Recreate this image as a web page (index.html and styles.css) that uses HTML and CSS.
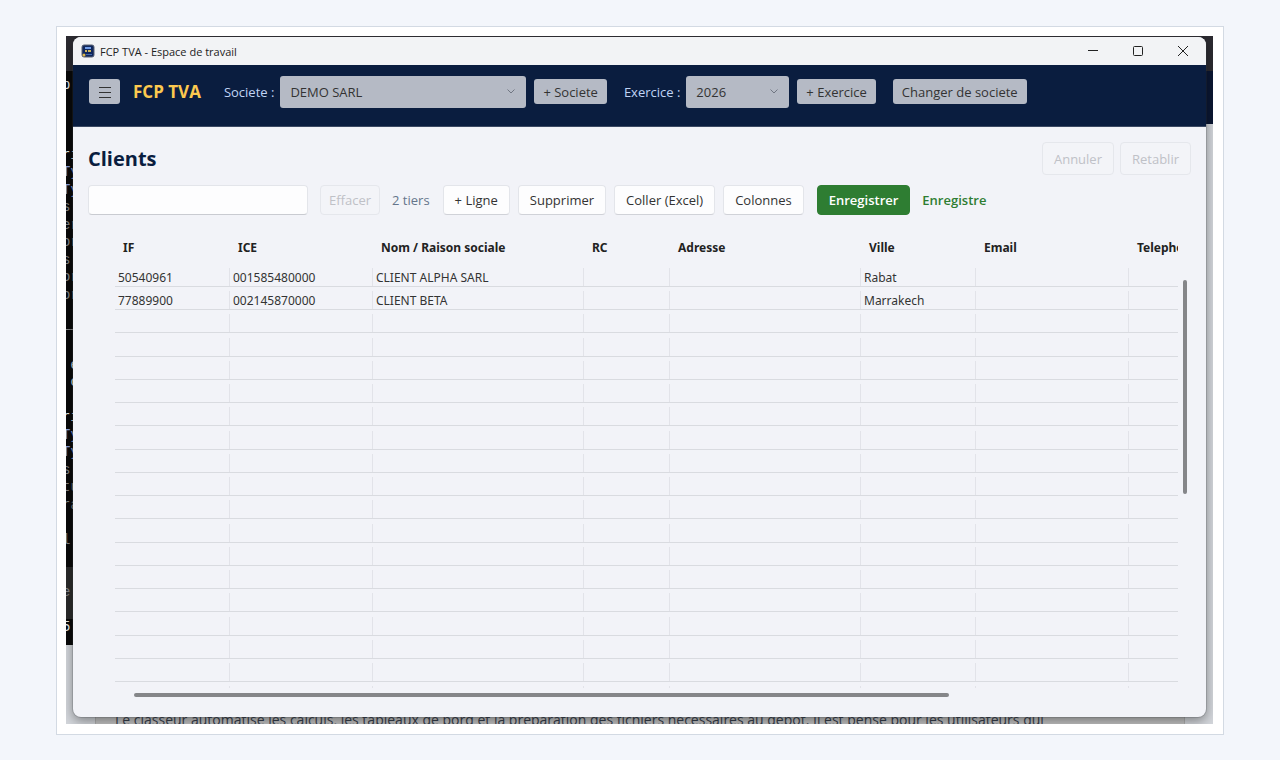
FILE: index.html
```
<!DOCTYPE html>
<html lang="fr">
<head>
  <meta charset="UTF-8">
  <title>FCP TVA - Espace de travail</title>
  <link rel="stylesheet" href="styles.css">
</head>
<body>
  <div class="frame">
    <div class="desktop">
      <div class="back-title"></div>
      <div class="back-band"></div>
      <div class="terminal" aria-hidden="true">
        <span class="bright">p</span>
        <span></span>
        <span></span>
        <span></span>
        <span class="bright">ri</span>
        <span class="blue">Ty</span>
        <span class="blue">Ty</span>
        <span>s</span>
        <span>er</span>
        <span>or</span>
        <span>s</span>
        <span>or</span>
        <span>or</span>
        <span></span>
        <span>──</span>
        <span></span>
        <span class="bright">&nbsp;e</span>
        <span class="bright">&nbsp;c</span>
        <span></span>
        <span class="bright">ri</span>
        <span class="blue">Ty</span>
        <span class="blue">Ty</span>
        <span>s</span>
        <span>tu</span>
        <span>ra</span>
        <span></span>
        <span>l</span>
        <span></span>
        <span class="prompt"></span>
        <span class="prompt">e</span>
        <span class="prompt"></span>
        <span class="bright">5</span>
      </div>
      <p class="doc">Le classeur automatise les calculs, les tableaux de bord et la préparation des fichiers nécessaires au dépôt. Il est pensé pour les utilisateurs qui</p>

      <div class="window">
        <div class="titlebar">
          <svg class="app-icon" viewBox="0 0 14 14">
            <rect x="1" y="1" width="12" height="12" rx="2" fill="#10275c" stroke="#5a6274"/>
            <path d="M4 4h6" stroke="#6f9be8" stroke-width="2"/>
            <path d="M4 7h2M7 7h3" stroke="#cdb45e" stroke-width="2"/>
            <path d="M5 10.500h6" stroke="#4468ab"/>
            <circle cx="3" cy="11" r="1.500" fill="#e0b84a"/>
          </svg>
          <span class="title">FCP TVA - Espace de travail</span>
          <div class="win-buttons">
            <button aria-label="Minimiser"><svg viewBox="0 0 12 12"><path d="M1 5.500h10"/></svg></button>
            <button aria-label="Agrandir"><svg viewBox="0 0 12 12"><rect x="1.500" y="1.500" width="9" height="9" rx="1"/></svg></button>
            <button aria-label="Fermer"><svg viewBox="0 0 12 12"><path d="M1 1l10 10M11 1l-10 10"/></svg></button>
          </div>
        </div>

        <header class="topbar">
          <button class="menu" aria-label="Menu"><svg viewBox="0 0 12 12"><path d="M0 1.500h12M0 6.500h12M0 11.500h12"/></svg></button>
          <strong class="brand">FCP TVA</strong>
          <label for="societe">Societe :</label>
          <select id="societe" class="societe"><option>DEMO SARL</option></select>
          <button>+ Societe</button>
          <label for="exercice" class="exercice-label">Exercice :</label>
          <select id="exercice" class="exercice"><option>2026</option></select>
          <button>+ Exercice</button>
          <button class="change">Changer de societe</button>
        </header>

        <main>
          <div class="heading">
            <h1>Clients</h1>
            <button disabled>Annuler</button>
            <button disabled>Retablir</button>
          </div>

          <div class="toolbar">
            <input type="text" id="recherche" aria-label="Rechercher">
            <button class="clear" disabled>Effacer</button>
            <span class="count">2 tiers</span>
            <button>+ Ligne</button>
            <button>Supprimer</button>
            <button>Coller (Excel)</button>
            <button>Colonnes</button>
            <button class="save">Enregistrer</button>
            <span class="saved">Enregistre</span>
          </div>

          <div class="sheet">
            <div class="table-clip">
              <table>
                <colgroup>
                  <col class="c-if"><col class="c-ice"><col class="c-nom"><col class="c-rc"><col class="c-adresse"><col class="c-ville"><col class="c-email"><col class="c-tel">
                </colgroup>
                <thead>
                  <tr><th>IF</th><th>ICE</th><th>Nom / Raison sociale</th><th>RC</th><th>Adresse</th><th>Ville</th><th>Email</th><th>Telephone</th></tr>
                </thead>
                <tbody>
                  <tr><td>50540961</td><td>001585480000</td><td>CLIENT ALPHA SARL</td><td></td><td></td><td>Rabat</td><td></td><td></td></tr>
                  <tr><td>77889900</td><td>002145870000</td><td>CLIENT BETA</td><td></td><td></td><td>Marrakech</td><td></td><td></td></tr>
                  <tr><td></td><td></td><td></td><td></td><td></td><td></td><td></td><td></td></tr>
                  <tr><td></td><td></td><td></td><td></td><td></td><td></td><td></td><td></td></tr>
                  <tr><td></td><td></td><td></td><td></td><td></td><td></td><td></td><td></td></tr>
                  <tr><td></td><td></td><td></td><td></td><td></td><td></td><td></td><td></td></tr>
                  <tr><td></td><td></td><td></td><td></td><td></td><td></td><td></td><td></td></tr>
                  <tr><td></td><td></td><td></td><td></td><td></td><td></td><td></td><td></td></tr>
                  <tr><td></td><td></td><td></td><td></td><td></td><td></td><td></td><td></td></tr>
                  <tr><td></td><td></td><td></td><td></td><td></td><td></td><td></td><td></td></tr>
                  <tr><td></td><td></td><td></td><td></td><td></td><td></td><td></td><td></td></tr>
                  <tr><td></td><td></td><td></td><td></td><td></td><td></td><td></td><td></td></tr>
                  <tr><td></td><td></td><td></td><td></td><td></td><td></td><td></td><td></td></tr>
                  <tr><td></td><td></td><td></td><td></td><td></td><td></td><td></td><td></td></tr>
                  <tr><td></td><td></td><td></td><td></td><td></td><td></td><td></td><td></td></tr>
                  <tr><td></td><td></td><td></td><td></td><td></td><td></td><td></td><td></td></tr>
                  <tr><td></td><td></td><td></td><td></td><td></td><td></td><td></td><td></td></tr>
                  <tr><td></td><td></td><td></td><td></td><td></td><td></td><td></td><td></td></tr>
                  <tr><td></td><td></td><td></td><td></td><td></td><td></td><td></td><td></td></tr>
                </tbody>
              </table>
            </div>
            <div class="vscroll"><div class="thumb"></div></div>
            <div class="hscroll"><div class="thumb"></div></div>
          </div>
        </main>
      </div>
    </div>
  </div>
</body>
</html>
```
FILE: styles.css
```
* {
  box-sizing: border-box;
}

body {
  margin: 0;
  padding: 26px 56px 25px;
  height: 100vh;
  background: #f3f6fb;
  font-family: "Open Sans", "Noto Sans", sans-serif;
  font-size: 13px;
  color: #333;
}

.frame {
  height: 100%;
  padding: 9px 10px 10px 9px;
  background: #fff;
  border: 1px solid #d3dae3;
}

.desktop {
  position: relative;
  height: 100%;
  padding: 1px 7px 7px;
  background: #d3d6db;
  overflow: hidden;
}

/* windows behind the main one */
.back-title,
.back-band {
  position: absolute;
  left: 0;
  right: 0;
  top: 0;
  height: 35px;
  background: #2c2b31;
}

.back-band {
  top: 35px;
  height: 53px;
  background: #0b1733;
}

.terminal {
  position: absolute;
  left: 0;
  top: 35px;
  width: 80px;
  height: 574px;
  padding-top: 6px;
  background: #0a0a0a;
  color: #858585;
  font-family: "Liberation Mono", monospace;
  font-size: 14px;
  overflow: hidden;
}

.terminal span {
  display: block;
  height: 17px;
  line-height: 17px;
  text-indent: -4px;
}

.terminal span:nth-child(even) {
  height: 18px;
}

.terminal .bright {
  color: #eee;
}

.terminal .blue {
  color: #8da4e0;
}

.terminal .prompt {
  background: #2b2b2b;
}

.doc {
  position: absolute;
  left: 29px;
  right: 28px;
  bottom: 0;
  height: 14px;
  margin: 0;
  padding-left: 19px;
  border-left: 1px solid #b0b0b0;
  border-right: 1px solid #b0b0b0;
  background: #c4c4c4;
  color: #39414e;
  font-size: 14px;
  line-height: 20px;
  white-space: nowrap;
  overflow: hidden;
}

.window {
  position: relative;
  display: flex;
  flex-direction: column;
  height: 100%;
  background: #f2f3f8;
  border-radius: 8px;
  box-shadow: 0 0 0 1px rgba(60, 64, 72, 0.2), 0 4px 12px rgba(0, 0, 0, 0.4);
  overflow: hidden;
}

button,
select,
input {
  font: inherit;
  color: inherit;
}

/* title bar */
.titlebar {
  display: flex;
  align-items: center;
  height: 28px;
  padding: 0 1px 0 8px;
  background: #f2f3f5;
  font-size: 11px;
  color: #222;
}

.app-icon {
  width: 14px;
  height: 14px;
  margin-right: 5px;
}

.win-buttons {
  display: flex;
  margin-left: auto;
}

.win-buttons button {
  display: flex;
  align-items: center;
  justify-content: center;
  width: 45px;
  height: 28px;
  padding: 0;
  border: 0;
  background: none;
}

svg {
  fill: none;
  stroke-width: 1;
}

.win-buttons svg {
  width: 12px;
  height: 12px;
  stroke: #222;
}

/* blue bar */
.topbar {
  display: flex;
  align-items: center;
  height: 62px;
  padding: 0 16px 8px;
  background: #0a1d3f;
  border-bottom: 1px solid #3b4963;
}

.topbar button {
  height: 25px;
  padding: 0 9px;
  border: 0;
  border-radius: 3px;
  background: #b5bac5;
}

.topbar .menu {
  display: flex;
  align-items: center;
  justify-content: center;
  width: 31px;
  padding: 0;
}

.menu svg {
  width: 12px;
  height: 12px;
  stroke: #333;
}

.brand {
  margin: 0 23px 0 13px;
  color: #fcc94f;
  font-size: 17px;
}

.topbar label {
  margin-right: 6px;
  color: #c0d4f5;
}

.topbar select {
  height: 32px;
  margin-right: 8px;
  padding: 0 10px;
  border: 0;
  border-radius: 3px;
  appearance: none;
  background: #b5bac5 url("data:image/svg+xml,%3Csvg xmlns='http://www.w3.org/2000/svg' width='8' height='5' fill='none' stroke='%23707682'%3E%3Cpath d='M.5.5L4 4 7.500.5'/%3E%3C/svg%3E") no-repeat right 11px center;
}

.societe {
  width: 246px;
}

.exercice {
  width: 103px;
}

.topbar .exercice-label {
  margin-left: 17px;
}

.topbar .change {
  margin-left: 17px;
}

/* page */
main {
  display: flex;
  flex: 1;
  flex-direction: column;
  min-height: 0;
  padding: 15px 15px 16px;
}

main button {
  height: 30px;
  padding: 0 11px;
  background: #fdfdfe;
  border: 1px solid #e3e5ea;
  border-bottom-color: #d0d2d8;
  border-radius: 4px;
}

main button:disabled {
  background: #f3f4f8;
  border-color: #e5e7ec;
  color: #bfc1c7;
}

.heading {
  display: flex;
  align-items: center;
  gap: 6px;
}

.heading h1 {
  flex: 1;
  margin: 0;
  color: #0a1d3f;
  font-size: 20px;
}

.heading button {
  height: 33px;
}

.toolbar {
  display: flex;
  align-items: center;
  gap: 8px;
  margin-top: 10px;
}

.toolbar input {
  width: 220px;
  height: 30px;
  padding: 0 10px;
  background: #fdfdfe;
  border: 1px solid #e3e5ea;
  border-bottom-color: #c9cbd1;
  border-radius: 4px;
}

.toolbar .clear {
  margin-left: 4px;
  padding: 0 8px;
}

.count {
  margin: 0 5px 0 4px;
  color: #65758b;
}

.toolbar .save {
  margin-left: 5px;
  background: #2e7d32;
  border-color: #2e7d32;
  color: #fff;
  font-weight: 600;
}

.saved {
  margin-left: 4px;
  color: #2e7d32;
  font-weight: 600;
}

/* grid */
.sheet {
  display: grid;
  grid-template-columns: 1fr 13px;
  grid-template-rows: 1fr 13px;
  flex: 1;
  min-height: 0;
  margin-top: 15px;
  padding-left: 27px;
}

.table-clip {
  overflow: hidden;
}

table {
  width: 1190px;
  table-layout: fixed;
  border-collapse: separate;
  border-spacing: 0;
  font-family: "Noto Sans", sans-serif;
  font-size: 12px;
}

.c-if { width: 115px; }
.c-ice { width: 143px; }
.c-nom { width: 211px; }
.c-rc { width: 86px; }
.c-adresse { width: 191px; }
.c-ville { width: 115px; }
.c-email { width: 153px; }

th {
  height: 34px;
  padding: 0 8px;
  text-align: left;
  color: #222;
}

/* the column rule stops short of the row above */
td {
  height: 23px;
  padding: 0 3px;
  line-height: 16px;
  vertical-align: bottom;
  border-bottom: 1px solid #d9dbe0;
  background: linear-gradient(#e2e3e9, #e2e3e9) no-repeat right bottom / 1px 18px;
}

tbody tr:nth-child(4n) td {
  height: 24px;
}

.thumb {
  background: #858689;
  border-radius: 2px;
}

.vscroll .thumb {
  width: 4px;
  height: 214px;
  margin: 50px 0 0 5px;
}

.hscroll .thumb {
  width: 815px;
  height: 4px;
  margin: 5px 0 0 19px;
}
```
